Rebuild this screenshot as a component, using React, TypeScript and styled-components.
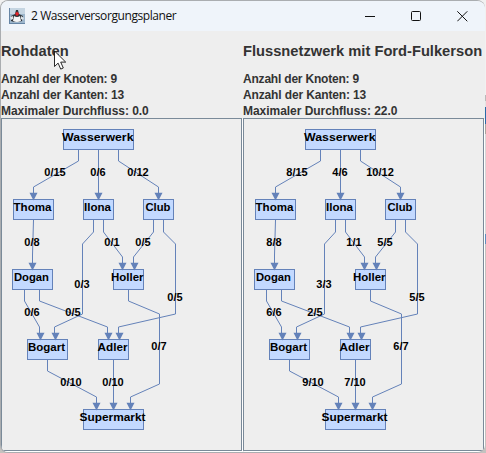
import React from "react";
import styled, { createGlobalStyle } from "styled-components";

const GlobalStyle = createGlobalStyle`
  html, body { margin: 0; padding: 0; overflow: hidden; }
`;

const Desktop = styled.div`
  position: relative;
  width: 486px;
  height: 453px;
  overflow: hidden;
  background: linear-gradient(
    to bottom,
    #f1f1f1 0 95px, #b9b9b9 95px 101px, #e4e4e4 101px 107px, #2a6aa8 107px 124px,
    #a9a49d 124px 134px, #d6d6d6 134px 234px, #5f8fbe 234px 244px, #c4c2bf 244px 453px
  );
`;

const Window = styled.div`
  box-sizing: border-box;
  width: 485px;
  height: 453px;
  display: flex;
  flex-direction: column;
  border: 1px solid #aaadb0;
  border-right-width: 0;
  border-radius: 8px;
  background: #eeeeee;
  overflow: hidden;
`;

const TitleBar = styled.header`
  flex: 0 0 30px;
  display: flex;
  align-items: center;
  background: #eff4fa;
`;

const AppIcon = styled.svg`
  width: 16px;
  height: 16px;
  margin: 0 6px 1px 8px;
`;

const Title = styled.h1`
  flex: 1;
  margin: 0;
  font: 400 12px/16px "Open Sans", "Noto Sans", sans-serif;
  letter-spacing: -0.42px;
  color: #111;
`;

const Controls = styled.div`
  display: flex;
  gap: 35px;
  margin-right: 17px;
`;

const ControlIcon = styled.svg`
  width: 11px;
  height: 11px;
  fill: none;
  stroke: #111;
`;

const Columns = styled.main`
  display: grid;
  grid-template-columns: 242px 242px;
`;

const Column = styled.section`
  display: flex;
  flex-direction: column;
  min-width: 0;
  white-space: nowrap;
  font-family: "Liberation Sans", Arial, sans-serif;
  font-weight: 700;
  color: #333;
`;

const Heading = styled.h2`
  margin: 12px 0;
  font-size: 14.7px;
  line-height: 16px;
`;

const Stat = styled.div<{ $tracking: number }>`
  font-size: 12px;
  line-height: 16px;
  height: 16px;
  letter-spacing: ${(p) => p.$tracking}px;
`;

const GraphPanel = styled.div`
  box-sizing: border-box;
  width: 241px;
  height: 333px;
  margin-top: -1px;
  border: 1px solid #7a8a99;
  box-shadow: 1px 1px 0 #fff;
`;

const Graph = styled.svg`
  display: block;
  width: 239px;
  height: 331px;
  overflow: visible;
  font-family: "Liberation Sans", Arial, sans-serif;
  font-size: 11px;
  font-weight: 700;
`;

const Pointer = styled.svg`
  position: absolute;
  left: 54px;
  top: 50px;
  width: 13px;
  height: 21px;
`;

// name, x, y, width, text start, text width
type NodeSpec = [string, number, number, number, number, number];
const nodes: NodeSpec[] = [
  ["Wasserwerk", 63, 129, 70, 62, 71.5],
  ["Thoma", 13, 199, 40, 13.5, 38],
  ["Ilona", 83, 199, 30, 84, 27],
  ["Club", 143, 199, 30, 145.5, 25],
  ["Dogan", 12, 269, 40, 14, 35],
  ["Holler", 113, 269, 30, 111, 32.5],
  ["Bogart", 27, 339, 40, 28, 37],
  ["Adler", 98, 339, 30, 97.5, 30],
  ["Supermarkt", 83, 409, 60, 79.5, 66],
];

const edges: number[][] = [
  [78, 150, 78, 161, 33, 187, 33, 199],
  [98, 150, 98, 199],
  [118, 150, 118, 161, 158, 187, 158, 199],
  [33, 220, 32, 255, 32, 269],
  [93, 220, 93, 232, 82, 244, 82, 314, 54, 327, 54, 334, 55, 339],
  [103, 220, 103, 232, 122, 257, 122, 269],
  [153, 220, 153, 232, 133, 257, 133, 264, 134, 269],
  [163, 220, 163, 232, 175, 244, 175, 314, 118, 327, 118, 334, 119, 339],
  [24, 290, 24, 301, 39, 327, 39, 334, 40, 339],
  [39, 290, 39, 301, 107, 327, 107, 334, 108, 339],
  [128, 290, 128, 301, 159, 314, 159, 384, 130, 397, 130, 409],
  [47, 360, 47, 371, 96, 397, 96, 409],
  [113, 360, 113, 409],
];

const labelSpots: [number, number][] = [
  [55, 176], [98, 176], [138, 176], [32, 246], [82, 288], [112, 246], [143, 246],
  [175, 301], [32, 316], [73, 316], [159, 350], [71, 386], [113, 386],
];

const capacities = [15, 6, 12, 8, 3, 1, 5, 5, 6, 5, 7, 10, 10];

interface NetworkProps {
  title: string;
  maxFlow: string;
  flows: number[];
}

function Network({ title, maxFlow, flows }: NetworkProps) {
  return (
    <Column>
      <Heading>{title}</Heading>
      <Stat $tracking={-0.2}>Anzahl der Knoten: 9</Stat>
      <Stat $tracking={-0.14}>Anzahl der Kanten: 13</Stat>
      <Stat $tracking={-0.04}>Maximaler Durchfluss: {maxFlow}</Stat>
      <GraphPanel>
        <Graph viewBox="2 119 239 331">
          {nodes.map(([name, x, y, w]) => (
            <rect key={name} x={x + 0.5} y={y + 0.5} width={w} height={20} fill="#c3d9ff" stroke="#6482b9" />
          ))}
          {edges.map((p, i) => {
            const pts: string[] = [];
            for (let k = 0; k < p.length; k += 2) pts.push(`${p[k] + 0.5},${p[k + 1]}`);
            const ax = p[p.length - 2] + 0.5;
            const ay = p[p.length - 1];
            return (
              <g key={i}>
                <polyline points={pts.join(" ")} fill="none" stroke="#6482b9" />
                <path d={`M${ax - 4} ${ay - 6.3}H${ax + 4}L${ax} ${ay + 1.5}Z`} fill="#6482b9" />
              </g>
            );
          })}
          {nodes.map(([name, , y, , tx, tw]) => (
            <text key={name} x={tx} y={y + 12} fill="#000" textLength={tw} lengthAdjust="spacingAndGlyphs">{name}</text>
          ))}
          {labelSpots.map(([x, y], i) => (
            <text key={i} x={x} y={y} fill="#000" textAnchor="middle">{`${flows[i]}/${capacities[i]}`}</text>
          ))}
        </Graph>
      </GraphPanel>
    </Column>
  );
}

export default function App() {
  return (
    <Desktop>
      <GlobalStyle />
      <Window>
        <TitleBar>
          <AppIcon viewBox="0 0 16 16">
            <rect width="16" height="16" fill="#9db6cc" />
            <path d="M0 0h16v6H0z" fill="#c5d5e2" />
            <path d="M.5 0v16M0 15.5h16" stroke="#6685a5" />
            <path d="M2 8l4-2 1-4 2 0 1 4 4 2-1 5-3 1H5l-3-1z" fill="#30353a" />
            <path d="M5 8q3 2 6 0l1 5q-4 2-8 0z" fill="#f4f5f6" />
            <path d="M1 9l3-1v3l-2 1zM12 8l3 2-1 2-2-1z" fill="#dce3e8" />
            <path d="M8 3.5l2.2 2.2L8 8.2 6 5.8z" fill="#e0242b" />
          </AppIcon>
          <Title>2 Wasserversorgungsplaner</Title>
          <Controls>
            <ControlIcon viewBox="0 0 11 11"><path d="M0 5.5h10" /></ControlIcon>
            <ControlIcon viewBox="0 0 11 11"><rect x=".5" y=".5" width="9" height="9" rx="1" /></ControlIcon>
            <ControlIcon viewBox="0 0 11 11"><path d="M.3.3l10 10M10.3.3l-10 10" /></ControlIcon>
          </Controls>
        </TitleBar>
        <Columns>
          <Network title="Rohdaten" maxFlow="0.0" flows={Array(13).fill(0)} />
          <Network
            title="Flussnetzwerk mit Ford-Fulkerson"
            maxFlow="22.0"
            flows={[8, 4, 10, 8, 3, 1, 5, 5, 6, 2, 6, 9, 7]}
          />
        </Columns>
      </Window>
      <Pointer viewBox="0 0 13 21">
        <path d="M.5 1v15.5l3.6-3.4 2.6 6 2.6-1.1-2.6-5.9h5z" fill="#fff" stroke="#111" strokeWidth=".9" />
      </Pointer>
    </Desktop>
  );
}
